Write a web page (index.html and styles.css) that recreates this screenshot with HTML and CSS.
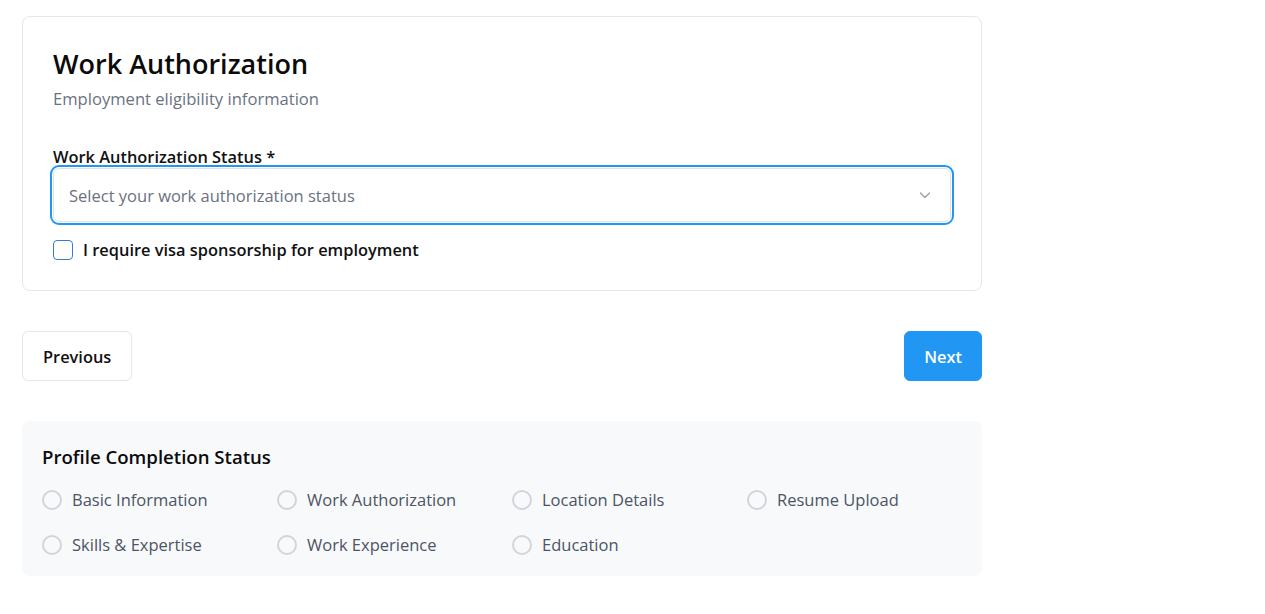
FILE: index.html
```html
<!DOCTYPE html>
<html lang="en">
<head>
<meta charset="utf-8">
<title>Work Authorization</title>
<link rel="stylesheet" href="styles.css">
</head>
<body>
<main class="wrap">
  <section class="card">
    <h1 class="title">Work Authorization</h1>
    <p class="subtitle">Employment eligibility information</p>
    <div class="field">
      <label class="label">Work Authorization Status *</label>
      <div class="select">
        <span class="placeholder">Select your work authorization status</span>
        <svg class="chev" width="14" height="14" viewBox="0 0 14 14" fill="none" stroke="#9ca3af" stroke-width="1.4" stroke-linecap="round" stroke-linejoin="round"><path d="M2.5 5l4.5 4.5L11.5 5"/></svg>
      </div>
    </div>
    <label class="check">
      <span class="box"></span>
      <span class="check-text">I require visa sponsorship for employment</span>
    </label>
  </section>

  <div class="nav">
    <button class="btn btn-prev">Previous</button>
    <button class="btn btn-next">Next</button>
  </div>

  <section class="status">
    <h2 class="status-title">Profile Completion Status</h2>
    <ul class="steps">
      <li class="step"><span class="dot"></span>Basic Information</li>
      <li class="step"><span class="dot"></span>Work Authorization</li>
      <li class="step"><span class="dot"></span>Location Details</li>
      <li class="step"><span class="dot"></span>Resume Upload</li>
      <li class="step"><span class="dot"></span>Skills &amp; Expertise</li>
      <li class="step"><span class="dot"></span>Work Experience</li>
      <li class="step"><span class="dot"></span>Education</li>
    </ul>
  </section>
</main>
</body>
</html>
```

FILE: styles.css
```css
* { box-sizing: border-box; }
html, body { margin: 0; background: #fff; }
body {
  font-family: "Open Sans", "Noto Sans", "Liberation Sans", sans-serif;
  color: #111;
  padding: 16px 22px;
}
.wrap { width: 960px; }

.card {
  border: 1px solid #e5e7eb;
  border-radius: 8px;
  padding: 28px 30px 28px;
}
.title {
  margin: 0;
  font-size: 27px;
  font-weight: 600;
  line-height: 38px;
  color: #0b0b0b;
}
.subtitle {
  margin: 4px 0 0;
  font-size: 16.6px;
  line-height: 24px;
  color: #6b7280;
}
.field { margin-top: 35px; }
.label {
  display: block;
  font-size: 16.4px;
  font-weight: 600;
  line-height: 22px;
  color: #111;
}
.select {
  height: 54px;
  border: 1px solid #e2e2e2;
  border-radius: 6px;
  outline: 2.5px solid #2196f3;
  outline-offset: 1.5px;
  display: flex;
  align-items: center;
  justify-content: space-between;
  padding: 0 18px 0 15px;
}
.placeholder { font-size: 16.5px; color: #6b7280; }
.chev { display: block; }

.check {
  display: flex;
  align-items: center;
  gap: 10px;
  margin-top: 16px;
}
.box {
  width: 20px;
  height: 20px;
  border: 1.5px solid #2f7fd6;
  border-radius: 4px;
  background: #fff;
}
.check-text { font-size: 16.4px; font-weight: 600; line-height: 24px; color: #111; }

.nav {
  display: flex;
  justify-content: space-between;
  margin-top: 40px;
}
.btn {
  font-family: inherit;
  font-size: 16.4px;
  font-weight: 600;
  height: 50px;
  border-radius: 6px;
  cursor: pointer;
}
.btn-prev {
  background: #fff;
  border: 1px solid #e5e7eb;
  color: #111;
  padding: 0 20px;
}
.btn-next {
  background: #2196f3;
  border: 1px solid #2196f3;
  color: #fff;
  padding: 0 19px;
}

.status {
  margin-top: 40px;
  background: #f8f9fb;
  border-radius: 8px;
  padding: 23px 20px 9px;
}
.status-title {
  margin: 0;
  font-size: 18.6px;
  font-weight: 600;
  line-height: 26px;
  color: #0b0b0b;
}
.steps {
  list-style: none;
  margin: 7px 0 0;
  padding: 0;
  display: grid;
  grid-template-columns: repeat(4, 215px);
  column-gap: 20px;
}
.step {
  display: flex;
  align-items: center;
  gap: 10px;
  height: 45px;
  font-size: 16.5px;
  color: #4b5563;
}
.dot {
  width: 20px;
  height: 20px;
  border: 2px solid #d1d5db;
  border-radius: 50%;
  flex: none;
}
```
